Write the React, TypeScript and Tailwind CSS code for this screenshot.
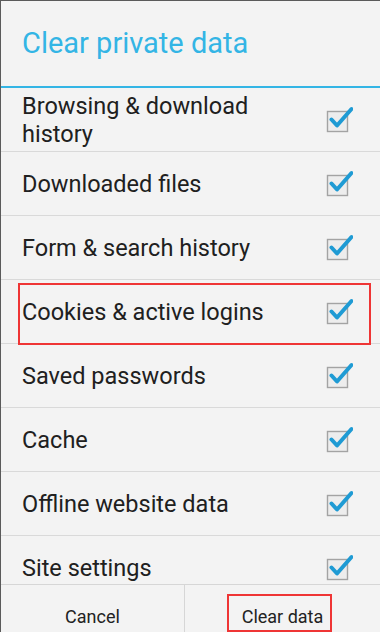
import React from 'react';

const items = [
  'Browsing & download history',
  'Downloaded files',
  'Form & search history',
  'Cookies & active logins',
  'Saved passwords',
  'Cache',
  'Offline website data',
  'Site settings',
];

const CheckBox = () => (
  <svg width="28" height="28" viewBox="0 0 28 28" className="shrink-0">
    <rect x="2.5" y="5.5" width="20" height="20" fill="#ededed" stroke="#a3a3a3" strokeWidth="1.4" />
    <path d="M6.5 13.5 L12 19.5 L26.5 3" fill="none" stroke="#1f9bd4" strokeWidth="4" strokeLinecap="round" strokeLinejoin="round" />
  </svg>
);

const App = () => {
  return (
    <div className="relative w-[380px] h-[632px] overflow-hidden bg-[#f3f3f3] border-t border-l border-[#5a5a5a] font-['Roboto','Liberation_Sans',sans-serif]">
      <div className="h-[85px] flex items-center pl-[21px]">
        <h1 className="text-[29px] leading-none text-[#33b5e5]">Clear private data</h1>
      </div>
      <div className="h-[2px] bg-[#33b5e5]" />
      <div className="h-[496px] overflow-hidden">
        {items.map((label) => (
          <div key={label} className="h-[64px] shrink-0 flex items-center justify-between border-b border-[#d9d9d9] pl-[21px] pr-[27px]">
            <span className="text-[23.5px] leading-[28px] text-[#202020] pr-6">{label}</span>
            <CheckBox />
          </div>
        ))}
      </div>
      <div className="h-[64px] flex border-t border-[#d6d6d6]">
        <button className="w-[184px] flex items-center justify-center border-r border-[#d6d6d6] text-[18px] text-[#222]">Cancel</button>
        <button className="flex-1 flex items-center justify-center text-[18px] text-[#222]">Clear data</button>
      </div>

      {/* annotation boxes */}
      <div className="absolute left-[17px] top-[282px] w-[353px] h-[62px] border-2 border-[#ef3535]" />
      <div className="absolute left-[226px] top-[593px] w-[105px] h-[38px] border-2 border-[#ef3535]" />
    </div>
  );
};

export default App;
